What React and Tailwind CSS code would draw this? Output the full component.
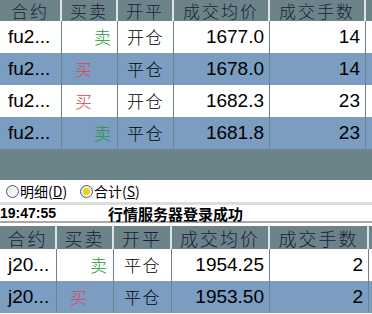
import React from 'react';

const cjk = 'font-["Noto_Sans_CJK_SC",sans-serif]';
const arial = 'font-["Liberation_Sans","Noto_Sans_CJK_SC",sans-serif]';

const topCols = ['w-[62px]', 'w-[56px]', 'w-[56px]', 'w-[96px]', 'w-[96px]'];
const bottomCols = ['w-[57px]', 'w-[57px]', 'w-[58px]', 'w-[98px]', 'w-[99px]'];
const headers = ['合约', '买卖', '开平', '成交均价', '成交手数'];

const topRows = [
  { code: 'fu2...', side: '卖', action: '开仓', price: '1677.0', qty: '14' },
  { code: 'fu2...', side: '买', action: '平仓', price: '1678.0', qty: '14' },
  { code: 'fu2...', side: '买', action: '开仓', price: '1682.3', qty: '23' },
  { code: 'fu2...', side: '卖', action: '平仓', price: '1681.8', qty: '23' },
];

const bottomRows = [
  { code: 'j20...', side: '卖', action: '平仓', price: '1954.25', qty: '2' },
  { code: 'j20...', side: '买', action: '平仓', price: '1953.50', qty: '2' },
];

function HeaderRow({ cols, height, size }) {
  return (
    <div className={`flex bg-[#6b8389] ${height}`}>
      {headers.map((h, i) => (
        <div
          key={h}
          className={`${cols[i]} shrink-0 flex items-center justify-center border-r-2 border-[#dce3e5] ${size} leading-none font-light tracking-[2px] text-[#1c1c34] ${cjk}`}
        >
          {h}
        </div>
      ))}
      <div className="flex-1" />
    </div>
  );
}

function DataRow({ row, cols, index }) {
  const bg = index % 2 === 0 ? 'bg-white' : 'bg-[#7b9dc2]';
  const isSell = row.side === '卖';
  return (
    <div className={`flex h-[32px] ${bg} text-black`}>
      <div className={`${cols[0]} shrink-0 flex items-center pl-2 border-r border-[#6b8389] text-[19px] ${arial}`}>
        {row.code}
      </div>
      <div
        className={`${cols[1]} shrink-0 flex items-center border-r border-[#6b8389] text-[17px] font-light ${cjk} ${
          isSell ? 'justify-end pr-[6px] text-[#1f9a35]' : 'justify-start pl-[13px] text-[#e0404f]'
        }`}
      >
        {row.side}
      </div>
      <div className={`${cols[2]} shrink-0 flex items-center justify-center border-r border-[#6b8389] text-[17px] font-light tracking-[1.5px] ${cjk}`}>
        {row.action}
      </div>
      <div className={`${cols[3]} shrink-0 flex items-center justify-end pr-[5px] border-r border-[#6b8389] text-[19px] ${arial}`}>
        {row.price}
      </div>
      <div className={`${cols[4]} shrink-0 flex items-center justify-end pr-[5px] border-r border-[#6b8389] text-[19px] ${arial}`}>
        {row.qty}
      </div>
      <div className="flex-1" />
    </div>
  );
}

function Radio({ checked, label, hotkey }) {
  return (
    <div className={`flex items-center gap-[1px] text-[14px] text-black leading-none whitespace-nowrap ${cjk}`}>
      <span className="w-[13px] h-[13px] shrink-0 rounded-full border border-[#3a5a8a] bg-gradient-to-br from-[#e4e4e4] to-white flex items-center justify-center">
        {checked && <span className="w-[7px] h-[7px] rounded-full bg-[#f0d000]" />}
      </span>
      <span>
        {label}(<span className="underline">{hotkey}</span>)
      </span>
    </div>
  );
}

export default function App() {
  return (
    <div className="w-[372px] h-[314px] overflow-hidden bg-white">
      <HeaderRow cols={topCols} height="h-[21px]" size="text-[17px]" />
      {topRows.map((r, i) => (
        <DataRow key={i} row={r} cols={topCols} index={i} />
      ))}
      <div className="h-[31px] bg-[#6b8389]" />

      <div className="h-[22px] flex items-center pl-[6px]">
        <div className="w-[74px]">
          <Radio label="明细" hotkey="D" />
        </div>
        <Radio checked label="合计" hotkey="S" />
      </div>
      <div className="h-[3px] bg-[#dcdcdc]" />
      <div className="h-[16px] flex items-center">
        <span className={`text-[14px] font-bold text-black leading-none ${arial}`}>19:47:55</span>
        <span className={`ml-[52px] text-[15px] font-bold text-black leading-none ${cjk}`}>行情服务器登录成功</span>
      </div>
      <div className="h-[2px] bg-[#a8a8a8]" />
      <div className="h-[3px] bg-white" />

      <HeaderRow cols={bottomCols} height="h-[23px]" size="text-[18px]" />
      {bottomRows.map((r, i) => (
        <DataRow key={i} row={r} cols={bottomCols} index={i} />
      ))}
    </div>
  );
}
